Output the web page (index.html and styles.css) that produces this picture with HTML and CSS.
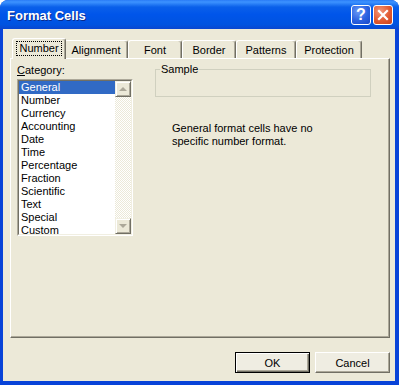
FILE: index.html
```html
<!DOCTYPE html>
<html lang="en">
<head>
    <meta charset="UTF-8">
    <meta name="viewport" content="width=device-width, initial-scale=1.0">
    <title>Format Cells</title>
    <link rel="stylesheet" href="styles.css">
</head>
<body>
    <div class="window">
        <div class="titlebar">
            <span class="title">Format Cells</span>
            <div class="caption-buttons">
                <div class="cap-btn cap-help">?</div>
                <div class="cap-btn cap-close">
                    <svg width="18" height="18" viewBox="0 0 18 18">
                        <path d="M5 5 L13 13 M13 5 L5 13" stroke="#fff" stroke-width="2.2" stroke-linecap="square"/>
                    </svg>
                </div>
            </div>
        </div>
        <div class="client">
            <div class="tabs">
                <div class="tab tab-number active"><span class="focus">Number</span></div>
                <div class="tab tab-alignment">Alignment</div>
                <div class="tab tab-font">Font</div>
                <div class="tab tab-border">Border</div>
                <div class="tab tab-patterns">Patterns</div>
                <div class="tab tab-protection">Protection</div>
            </div>
            <div class="panel">
                <div class="category">
                    <div class="field-label"><u>C</u>ategory:</div>
                    <div class="listbox">
                        <div class="listbox-inner">
                            <ul class="cat-list">
                                <li class="selected">General</li>
                                <li>Number</li>
                                <li>Currency</li>
                                <li>Accounting</li>
                                <li>Date</li>
                                <li>Time</li>
                                <li>Percentage</li>
                                <li>Fraction</li>
                                <li>Scientific</li>
                                <li>Text</li>
                                <li>Special</li>
                                <li>Custom</li>
                            </ul>
                            <div class="scrollbar">
                                <div class="scroll-btn up"></div>
                                <div class="scroll-track"></div>
                                <div class="scroll-btn down"></div>
                            </div>
                        </div>
                    </div>
                </div>
                <div class="details">
                    <fieldset class="sample">
                        <legend>Sample</legend>
                        <div class="sample-value"></div>
                    </fieldset>
                    <p class="desc">General format cells have no<br>specific number format.</p>
                </div>
            </div>
            <div class="actions">
                <button class="btn btn-default">OK</button>
                <button class="btn">Cancel</button>
            </div>
        </div>
    </div>
</body>
</html>
```

FILE: styles.css
```css
* {
    box-sizing: border-box;
}
body {
    margin: 0;
    font-family: "Liberation Sans", Arial, sans-serif;
    font-size: 11px;
    color: #000;
    background: #fff;
}
.window {
    width: 399px;
    height: 385px;
    display: flex;
    flex-direction: column;
    background: #0843d8;
    border-radius: 8px 8px 0 0;
    overflow: hidden;
}

/* title bar */
.titlebar {
    height: 29px;
    display: flex;
    align-items: flex-start;
    justify-content: space-between;
    padding-left: 7px;
    background: linear-gradient(to bottom, #2a7cf6 0, #3d93ff 2px, #0a60ea 7px, #0055ea 50%, #0053e0 85%, #0a46cf 100%);
}
.title {
    margin-top: 8px;
    color: #fff;
    font-weight: bold;
    font-size: 13px;
    text-shadow: 1px 1px #0b2a8a;
}
.caption-buttons {
    display: flex;
    gap: 2px;
    margin: 5px 6px 0 0;
}
.cap-btn {
    width: 20px;
    height: 20px;
    border: 1px solid #fff;
    border-radius: 3px;
    display: flex;
    align-items: center;
    justify-content: center;
    color: #fff;
}
.cap-help {
    background: radial-gradient(circle at 35% 30%, #6a9af6, #2b62e0 55%, #1747c8);
    font-weight: bold;
    font-size: 16px;
    line-height: 18px;
}
.cap-close {
    background: radial-gradient(circle at 35% 30%, #f3977a, #e15a32 55%, #c8401c);
}

/* dialog body */
.client {
    flex: 1;
    margin: 0 4px 4px 3px;
    background: #ece9d8;
    padding: 9px 5px 8px 7px;
    display: flex;
    flex-direction: column;
}
.tabs {
    height: 20px;
    display: flex;
    align-items: flex-end;
    padding-left: 4px;
    position: relative;
    z-index: 1;
}
.tab {
    height: 18px;
    border: 1px solid;
    border-color: #fff #716f64 transparent #fff;
    border-bottom: 0;
    border-radius: 3px 3px 0 0;
    box-shadow: inset -1px 0 #aca899;
    background: #ece9d8;
    display: flex;
    align-items: center;
    justify-content: center;
}
.tab-number { width: 50px; }
.tab-alignment { width: 64px; }
.tab-font { width: 54px; }
.tab-border { width: 54px; }
.tab-patterns { width: 60px; }
.tab-protection { width: 66px; }
.tab.active {
    width: 54px;
    height: 21px;
    margin: 0 -2px -1px;
    position: relative;
    z-index: 2;
    align-items: flex-start;
    padding-top: 2px;
}
.focus {
    border: 1px dotted #000;
    padding: 0 2px;
    line-height: 13px;
}
.panel {
    height: 280px;
    border: 1px solid;
    border-color: #fff #716f64 #716f64 #fff;
    box-shadow: inset -1px -1px #aca899;
    display: flex;
    padding: 5px 0 0 6px;
}

/* category list */
.field-label {
    line-height: 13px;
    margin-bottom: 2px;
}
.listbox {
    width: 116px;
    height: 157px;
    border: 1px solid;
    border-color: #aca899 #fff #fff #aca899;
}
.listbox-inner {
    height: 100%;
    border: 1px solid;
    border-color: #716f64 #f1efe2 #f1efe2 #716f64;
    background: #fff;
    display: flex;
    overflow: hidden;
}
.cat-list {
    list-style: none;
    margin: 0;
    padding: 0;
    width: 96px;
}
.cat-list li {
    height: 13px;
    line-height: 13px;
    padding-left: 2px;
    white-space: nowrap;
}
.cat-list li.selected {
    background: #316ac5;
    color: #fff;
}
.scrollbar {
    width: 16px;
    display: flex;
    flex-direction: column;
}
.scroll-btn {
    height: 16px;
    border: 1px solid;
    border-color: #f1efe2 #716f64 #716f64 #f1efe2;
    box-shadow: inset 1px 1px #fff, inset -1px -1px #aca899;
    background: #ece9d8;
    display: flex;
    align-items: center;
    justify-content: center;
}
.scroll-btn::after {
    content: "";
    border-left: 4px solid transparent;
    border-right: 4px solid transparent;
}
.scroll-btn.up::after {
    border-bottom: 4px solid #aca899;
}
.scroll-btn.down::after {
    border-top: 4px solid #aca899;
}
.scroll-track {
    flex: 1;
    background: repeating-conic-gradient(#fff 0 25%, #ece9d8 0 50%) 0 0 / 2px 2px;
}

/* sample + description */
.details {
    margin: -1px 0 0 22px;
}
.sample {
    width: 216px;
    margin: 0;
    padding: 0 0 0 4px;
    border: 1px solid #d0d0bf;
}
.sample legend {
    padding: 0 1px;
    line-height: 13px;
}
.sample-value {
    height: 20px;
}
.desc {
    margin: 25px 0 0 17px;
    line-height: 13px;
}

/* buttons */
.actions {
    margin-top: 14px;
    display: flex;
    justify-content: flex-end;
    gap: 5px;
}
.btn {
    width: 75px;
    height: 21px;
    font-family: inherit;
    font-size: 11px;
    color: #000;
    background: #efede2;
    border: 1px solid;
    border-color: #fff #716f64 #716f64 #fff;
    box-shadow: inset -1px -1px #aca899;
    padding: 0;
}
.btn-default {
    border-color: #000;
    box-shadow: inset 1px 1px #fff, inset -1px -1px #716f64, inset -2px -2px #aca899;
}
```
